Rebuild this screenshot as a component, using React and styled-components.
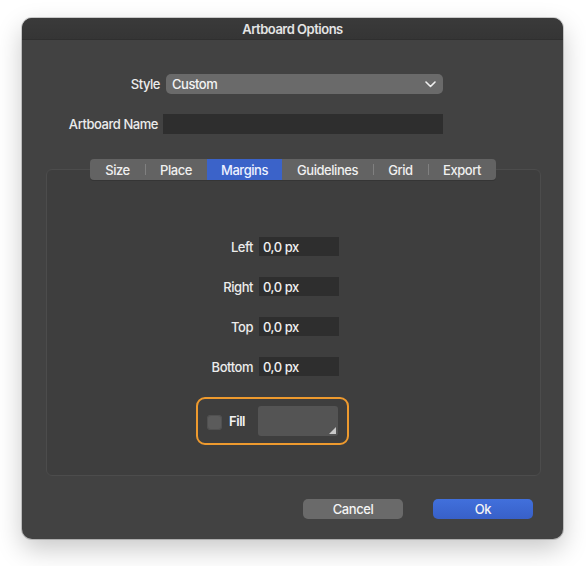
import React from "react";
import styled, { createGlobalStyle } from "styled-components";

const Global = createGlobalStyle`
  html, body { margin: 0; padding: 0; background: #ffffff; }
  body {
    font-family: Inter, "Liberation Sans", sans-serif;
    letter-spacing: -0.45px;
    -webkit-font-smoothing: antialiased;
  }
`;

const Page = styled.div`
  width: 586px;
  height: 566px;
  padding: 18px 0 0 22px;
  box-sizing: border-box;
`;

const Window = styled.div`
  width: 541px;
  height: 521px;
  background: #424242;
  border-radius: 10px;
  overflow: hidden;
  display: flex;
  flex-direction: column;
  box-shadow: 0 0 0 1px rgba(0, 0, 0, 0.18), 0 10px 26px rgba(0, 0, 0, 0.22);
`;

const TitleBar = styled.div`
  height: 21px;
  line-height: 22px;
  background: linear-gradient(#3a3a3a, #353535);
  color: #e4e4e4;
  font-size: 13px;
  font-weight: 600;
  letter-spacing: -0.5px;
  text-align: center;
  border-bottom: 1px solid #2f2f2f;
  flex-shrink: 0;
`;

const Content = styled.div`
  flex: 1;
  display: flex;
  flex-direction: column;
  padding-top: 34px;
`;

const FormRow = styled.div`
  display: flex;
  align-items: center;
  height: 20px;
  margin-bottom: ${(p) => p.$mb || 0}px;
`;

const Label = styled.div`
  width: ${(p) => p.$w}px;
  box-sizing: border-box;
  text-align: right;
  color: #ececec;
  font-size: 13px;
  font-weight: 500;
  padding-right: ${(p) => p.$gap}px;
  flex-shrink: 0;
`;

const Dropdown = styled.div`
  width: 277px;
  height: 20px;
  border-radius: 5px;
  background: #6a6a6a;
  display: flex;
  align-items: center;
  justify-content: space-between;
  padding: 0 7px 0 6px;
  box-sizing: border-box;
  color: #f4f4f4;
  font-size: 13px;
  font-weight: 500;
`;

const TextField = styled.div`
  width: ${(p) => p.$w}px;
  height: ${(p) => p.$h}px;
  background: #2e2e2e;
  color: #f0f0f0;
  font-size: 13px;
  font-weight: 500;
  display: flex;
  align-items: center;
  padding-left: 4px;
  box-sizing: border-box;
`;

const Panel = styled.div`
  margin: 35px 0 0 24px;
  width: 495px;
  height: 307px;
  box-sizing: border-box;
  border: 1px solid #4c4c4c;
  border-radius: 6px;
  background: #3e3e3e;
  display: flex;
  flex-direction: column;
`;

const TabBar = styled.div`
  align-self: center;
  margin-top: -11px;
  margin-left: -1px;
  display: flex;
  height: 21px;
  background: #636363;
  border-radius: 4px;
  overflow: hidden;
  box-shadow: 0 1px 0 #353535;
`;

const Tab = styled.div`
  position: relative;
  width: ${(p) => p.$w}px;
  display: flex;
  align-items: center;
  justify-content: center;
  font-size: 13px;
  font-weight: 500;
  color: ${(p) => (p.$active ? "#eef2ff" : "#f0f0f0")};
  background: ${(p) => (p.$active ? "#3b63c9" : "transparent")};
  &::before {
    content: "";
    display: ${(p) => (p.$sep ? "block" : "none")};
    position: absolute;
    left: 0;
    top: 5px;
    bottom: 5px;
    width: 1px;
    background: #808080;
  }
`;

const FieldGrid = styled.div`
  display: grid;
  grid-template-columns: 206px 80px;
  column-gap: 6px;
  row-gap: 21px;
  margin-top: 57px;
  align-items: center;
`;

const FieldLabel = styled.div`
  text-align: right;
  color: #ececec;
  font-size: 13px;
  font-weight: 500;
`;

const FillBox = styled.div`
  margin: 21px 0 0 149px;
  width: 153px;
  height: 48px;
  box-sizing: border-box;
  border: 2px solid #ee9a2e;
  border-radius: 9px;
  display: flex;
  align-items: center;
  padding: 0 9px;
`;

const Checkbox = styled.div`
  width: 15px;
  height: 15px;
  border-radius: 4px;
  background: #5b5b5b;
  box-shadow: inset 0 0 0 1px #505050;
  margin: 2px 7px 0 0;
  box-sizing: border-box;
`;

const FillLabel = styled.span`
  color: #f2f2f2;
  font-size: 13px;
  font-weight: 600;
`;

const ColorWell = styled.div`
  position: relative;
  margin-left: auto;
  width: 80px;
  height: 30px;
  border-radius: 3px;
  background: #545454;
`;

const Corner = styled.svg`
  position: absolute;
  right: 2px;
  bottom: 2px;
`;

const ButtonRow = styled.div`
  display: flex;
  justify-content: flex-end;
  gap: 30px;
  padding-right: 30px;
  margin-top: 23px;
`;

const Button = styled.div`
  width: 100px;
  height: 20px;
  border-radius: 5px;
  display: flex;
  align-items: center;
  justify-content: center;
  font-size: 13px;
  font-weight: 500;
  color: #f4f4f4;
  background: ${(p) =>
    p.$primary ? "linear-gradient(#4170dc, #3860c8)" : "#6a6a6a"};
`;

const tabs = [
  { label: "Size", w: 55 },
  { label: "Place", w: 62 },
  { label: "Margins", w: 75, active: true },
  { label: "Guidelines", w: 91 },
  { label: "Grid", w: 55 },
  { label: "Export", w: 68 },
];

const fields = ["Left", "Right", "Top", "Bottom"];

export default function App() {
  return (
    <Page>
      <Global />
      <Window>
        <TitleBar>Artboard Options</TitleBar>
        <Content>
          <FormRow $mb={20}>
            <Label $w={144} $gap={6}>Style</Label>
            <Dropdown>
              <span>Custom</span>
              <svg width="11" height="7" viewBox="0 0 11 7">
                <polyline points="1,1 5.5,5.5 10,1" fill="none" stroke="#f0f0f0" strokeWidth="1.6" strokeLinecap="round" strokeLinejoin="round" />
              </svg>
            </Dropdown>
          </FormRow>
          <FormRow>
            <Label $w={141} $gap={5}>Artboard Name</Label>
            <TextField $w={280} $h={20} />
          </FormRow>
          <Panel>
            <TabBar>
              {tabs.map((t, i) => {
                const prev = tabs[i - 1];
                const sep = i > 0 && !t.active && !(prev && prev.active);
                return (
                  <Tab key={t.label} $w={t.w} $active={t.active} $sep={sep}>
                    {t.label}
                  </Tab>
                );
              })}
            </TabBar>
            <FieldGrid>
              {fields.map((f) => (
                <React.Fragment key={f}>
                  <FieldLabel>{f}</FieldLabel>
                  <TextField $w={80} $h={19}>0,0 px</TextField>
                </React.Fragment>
              ))}
            </FieldGrid>
            <FillBox>
              <Checkbox />
              <FillLabel>Fill</FillLabel>
              <ColorWell>
                <Corner width="7" height="7" viewBox="0 0 7 7">
                  <polygon points="7,0 7,7 0,7" fill="#c8c8c8" />
                </Corner>
              </ColorWell>
            </FillBox>
          </Panel>
          <ButtonRow>
            <Button>Cancel</Button>
            <Button $primary>Ok</Button>
          </ButtonRow>
        </Content>
      </Window>
    </Page>
  );
}
